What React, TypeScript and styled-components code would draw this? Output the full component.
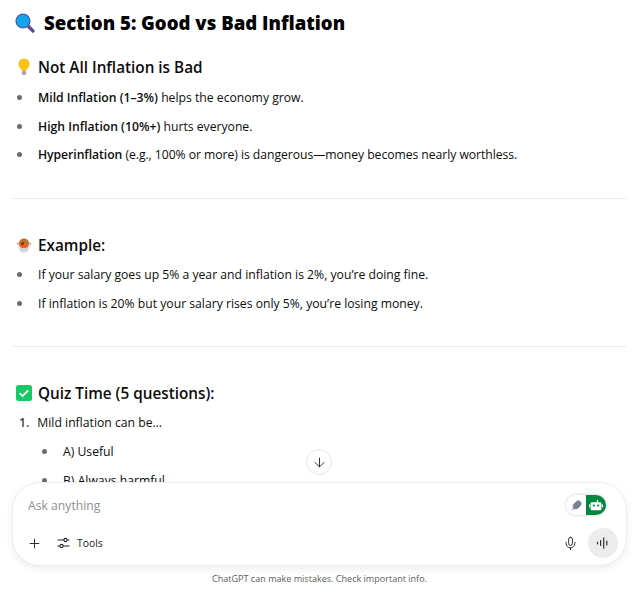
import React from 'react';
import styled, { createGlobalStyle } from 'styled-components';
import { ArrowDown, Mic, Plus, Feather } from 'lucide-react';

const GlobalStyle = createGlobalStyle`
  html, body {
    margin: 0;
    padding: 0;
    background: #fff;
  }
`;

const Page = styled.div`
  position: relative;
  width: 635px;
  height: 591px;
  overflow: hidden;
  background: #fff;
  color: #0d0d0d;
  font-family: "Open Sans", "Noto Sans", sans-serif;
`;

const Article = styled.main`
  padding: 10px 8px 0 12px;
`;

const Title = styled.h2`
  display: flex;
  align-items: center;
  gap: 9px;
  margin: 0 0 21px 3px;
  height: 25px;
  font-family: "Open Sans", sans-serif;
  font-size: 18.6px;
  font-weight: 800;
  line-height: 25px;
  color: #000;
`;

const Heading = styled.h3<{ $after?: number }>`
  display: flex;
  align-items: center;
  gap: 6px;
  margin: 0 0 ${p => p.$after ?? 4}px 4px;
  height: 22px;
  font-size: 15.3px;
  font-weight: 600;
  line-height: 22px;
`;

const List = styled.ul`
  list-style: none;
  margin: 0;
  padding: 0 0 0 26px;
`;

const Item = styled.li<{ $tracking?: number }>`
  position: relative;
  height: 28.7px;
  font-size: 12.2px;
  line-height: 29px;
  white-space: nowrap;
  letter-spacing: ${p => p.$tracking ?? 0}px;

  &::before {
    content: '';
    position: absolute;
    left: -21px;
    top: 12px;
    width: 5px;
    height: 5px;
    border-radius: 50%;
    background: #6b6b6b;
  }

  b {
    font-weight: 600;
  }
`;

const Rule = styled.hr<{ $top: number; $bottom: number }>`
  border: 0;
  border-top: 1px solid #ededed;
  margin: ${p => p.$top}px 0 ${p => p.$bottom}px;
`;

const Ordered = styled.div`
  display: flex;
  height: 29px;
  padding-left: 7px;
  gap: 8px;
  font-size: 12.2px;
  line-height: 29px;

  b {
    font-weight: 600;
    color: #444;
  }
`;

const SubList = styled(List)`
  padding-left: 51px;
`;

const ScrollButton = styled.button`
  position: absolute;
  left: 306px;
  top: 449px;
  width: 26px;
  height: 26px;
  padding: 0;
  display: flex;
  align-items: center;
  justify-content: center;
  border: 1px solid #e6e6e6;
  border-radius: 50%;
  background: #fff;
  color: #333;
`;

const Dock = styled.div`
  position: absolute;
  left: 12px;
  top: 482px;
  width: 615px;
`;

const Composer = styled.div`
  box-sizing: border-box;
  height: 84px;
  border: 1px solid #ededed;
  border-radius: 28px;
  background: #fff;
  box-shadow: 0 3px 8px rgba(0, 0, 0, 0.07);
  padding: 12px 8px 0 15px;
`;

const InputRow = styled.div`
  display: flex;
  align-items: center;
  justify-content: space-between;
  height: 20px;
  padding-right: 12px;
`;

const Placeholder = styled.span`
  font-size: 12.2px;
  color: #8f8f8f;
`;

const ExtensionPill = styled.div`
  display: flex;
  width: 40px;
  height: 20px;
  border-radius: 10px;
  overflow: hidden;
  background: #fff;
  box-shadow: 0 0 3px rgba(0, 0, 0, 0.25);
`;

const PillHalf = styled.span<{ $green?: boolean }>`
  flex: 1;
  display: flex;
  align-items: center;
  justify-content: center;
  background: ${p => (p.$green ? '#00883f' : '#fff')};
`;

const ActionRow = styled.div`
  display: flex;
  align-items: center;
  justify-content: space-between;
  margin: 13px 0 0 -1px;
`;

const ActionGroup = styled.div`
  display: flex;
  align-items: center;
`;

const ToolsLabel = styled.span`
  font-size: 10.4px;
  color: #222;
  margin-left: 7px;
`;

const ToolsSvg = styled.svg`
  margin-left: 15px;
`;

const VoiceButton = styled.span`
  display: flex;
  align-items: center;
  justify-content: center;
  width: 30px;
  height: 30px;
  border-radius: 50%;
  background: #ececec;
  margin-left: 10px;
`;

const Disclaimer = styled.div`
  margin-top: 6px;
  text-align: center;
  font-size: 9.05px;
  line-height: 14px;
  color: #5d5d5d;
`;

const SearchEmoji = () => (
  <svg width="20" height="20" viewBox="0 0 20 20">
    <path d="M12.5 12.5l5.5 5.5" stroke="#5e4b8b" strokeWidth="3.2" strokeLinecap="round" />
    <circle cx="8" cy="8" r="6.9" fill="#12a5ee" stroke="#4a5fa8" strokeWidth="1.4" />
  </svg>
);

const BulbEmoji = () => (
  <svg width="16" height="18" viewBox="2 0 16 18">
    <path d="M10 0.5a5.6 5.6 0 0 0-3.4 10c.8.7 1.2 1.6 1.3 2.5h4.2c.1-.9.5-1.8 1.3-2.5A5.6 5.6 0 0 0 10 .5z" fill="#fcc21b" />
    <rect x="7.9" y="13" width="4.2" height="4" rx="1.2" fill="#a8a8a8" />
  </svg>
);

const StewEmoji = () => (
  <svg width="16" height="15" viewBox="0 0 20 18.5">
    <path d="M2 7h16" stroke="#b9b3bd" strokeWidth="2.4" fill="none" strokeLinecap="round" />
    <ellipse cx="10" cy="9.6" rx="7" ry="8.6" fill="#d9d3dc" />
    <circle cx="10" cy="6.6" r="6.2" fill="#e5641f" />
    <circle cx="8.2" cy="7" r="2" fill="#7a3b1d" />
    <circle cx="12.8" cy="5.6" r="1.2" fill="#3aa655" />
    <circle cx="10.4" cy="3.4" r="1.1" fill="#3aa655" />
  </svg>
);

const CheckEmoji = () => (
  <svg width="16" height="16" viewBox="0 0 16 16">
    <rect width="16" height="16" rx="2.5" fill="#17c964" />
    <path d="M3.6 8.2l3 2.9 5.6-5.8" fill="none" stroke="#fff" strokeWidth="1.8" />
  </svg>
);

const RobotGlyph = () => (
  <svg width="14" height="13" viewBox="0 0 14 13">
    <path d="M8 3.4l.8-2.6" stroke="#fff" strokeWidth="1.2" />
    <rect x="1.6" y="3.2" width="10.8" height="8" rx="1" fill="#fff" />
    <rect x="3.8" y="5.6" width="2" height="1.8" fill="#00883f" />
    <rect x="8.2" y="5.6" width="2" height="1.8" fill="#00883f" />
    <rect x="0" y="5.4" width="1.2" height="3" fill="#fff" />
    <rect x="12.8" y="5.4" width="1.2" height="3" fill="#fff" />
  </svg>
);

const ToolsGlyph = () => (
  <ToolsSvg width="13" height="12" viewBox="0 0 13 12" fill="none" stroke="#222" strokeWidth="1.1">
    <path d="M0.5 3h6.4M10.1 3h2.4M0.5 9h2.4M6.1 9h6.4" />
    <circle cx="8.5" cy="3" r="1.6" />
    <circle cx="4.5" cy="9" r="1.6" />
  </ToolsSvg>
);

const VoiceGlyph = () => (
  <svg width="14" height="14" viewBox="0 0 14 14" fill="none" stroke="#333" strokeWidth="1.2" strokeLinecap="round">
    <path d="M1.5 6.2v1.6M4.6 4.5v5M7.7 1.8v10.4M10.8 5v4" />
  </svg>
);

export default function App() {
  return (
    <Page>
      <GlobalStyle />
      <Article>
        <Title>
          <SearchEmoji />
          Section 5: Good vs Bad Inflation
        </Title>
        <Heading $after={5}>
          <BulbEmoji />
          Not All Inflation is Bad
        </Heading>
        <List>
          <Item><b>Mild Inflation (1–3%)</b> helps the economy grow.</Item>
          <Item><b>High Inflation (10%+)</b> hurts everyone.</Item>
          <Item $tracking={-0.05}><b>Hyperinflation</b> (e.g., 100% or more) is dangerous—money becomes nearly worthless.</Item>
        </List>
        <Rule $top={29} $bottom={35} />
        <Heading>
          <StewEmoji />
          Example:
        </Heading>
        <List>
          <Item>If your salary goes up 5% a year and inflation is 2%, you’re doing fine.</Item>
          <Item>If inflation is 20% but your salary rises only 5%, you’re losing money.</Item>
        </List>
        <Rule $top={29} $bottom={35} />
        <Heading>
          <CheckEmoji />
          Quiz Time (5 questions):
        </Heading>
        <Ordered>
          <b>1.</b>
          Mild inflation can be…
        </Ordered>
        <SubList>
          <Item>A) Useful</Item>
          <Item>B) Always harmful</Item>
        </SubList>
      </Article>
      <ScrollButton aria-label="Scroll down">
        <ArrowDown size={15} strokeWidth={1.6} />
      </ScrollButton>
      <Dock>
        <Composer>
          <InputRow>
            <Placeholder>Ask anything</Placeholder>
            <ExtensionPill>
              <PillHalf>
                <Feather size={11} color="#7a8296" fill="#7a8296" />
              </PillHalf>
              <PillHalf $green>
                <RobotGlyph />
              </PillHalf>
            </ExtensionPill>
          </InputRow>
          <ActionRow>
            <ActionGroup>
              <Plus size={15} strokeWidth={1.5} color="#222" />
              <ToolsGlyph />
              <ToolsLabel>Tools</ToolsLabel>
            </ActionGroup>
            <ActionGroup>
              <Mic size={15} strokeWidth={1.5} color="#222" />
              <VoiceButton>
                <VoiceGlyph />
              </VoiceButton>
            </ActionGroup>
          </ActionRow>
        </Composer>
        <Disclaimer>ChatGPT can make mistakes. Check important info.</Disclaimer>
      </Dock>
    </Page>
  );
}
